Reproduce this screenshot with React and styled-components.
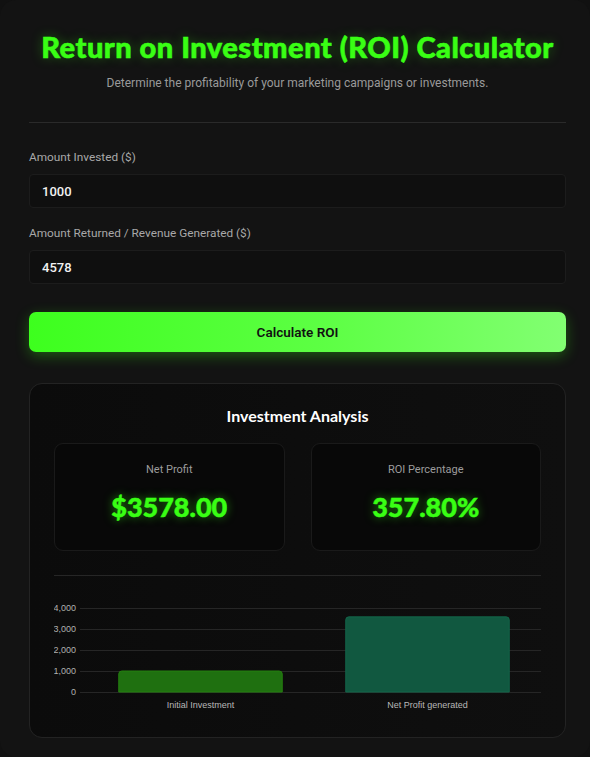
import React, { useState } from "react"
import styled, { createGlobalStyle } from "styled-components"

const GlobalStyle = createGlobalStyle`
  html, body {
    margin: 0;
    padding: 0;
    background: #111111;
  }
  body {
    font-family: Roboto, "Liberation Sans", Arial, sans-serif;
    color: #e8e8e8;
  }
  * {
    box-sizing: border-box;
  }
`

const Page = styled.main`
  min-height: 757px;
  background: #131313;
  border-radius: 16px;
  padding: 30px 24px 0 29px;
  display: flex;
  flex-direction: column;
`

const Header = styled.header`
  text-align: center;
  padding-bottom: 30px;
  border-bottom: 1px solid #2a2a2a;
  margin-bottom: 26px;
`

const Title = styled.h1`
  margin: 0 0 10px;
  font-family: Lato, "Noto Sans", sans-serif;
  font-weight: 900;
  font-size: 29px;
  line-height: 34px;
  letter-spacing: 0.5px;
  color: #39ff14;
  -webkit-text-stroke: 0.6px #39ff14;
  text-shadow: 0 0 12px rgba(57, 255, 20, 0.35);
`

const Subtitle = styled.p`
  margin: 0;
  font-size: 12px;
  line-height: 18px;
  color: #9a9a9a;
`

const Field = styled.div`
  display: flex;
  flex-direction: column;
  gap: 9px;
  margin-bottom: 17px;
`

const Label = styled.label`
  font-size: 11.8px;
  line-height: 16px;
  color: #a8a8a8;
`

const Input = styled.input`
  height: 34px;
  width: 100%;
  padding: 0 12px;
  background: #0f0f0f;
  border: 1px solid #1c1c1c;
  border-radius: 4px;
  color: #f2f2f2;
  font-family: inherit;
  font-weight: 500;
  font-size: 13px;
  outline: none;
`

const Button = styled.button`
  margin-top: 11px;
  height: 40px;
  width: 100%;
  border: none;
  border-radius: 7px;
  background: linear-gradient(90deg, #3dff1e 0%, #5dff44 55%, #82ff72 100%);
  box-shadow: 0 4px 14px rgba(57, 255, 20, 0.3);
  color: #111;
  font-family: inherit;
  font-weight: 600;
  font-size: 13.5px;
  cursor: pointer;
`

const Results = styled.section`
  margin-top: 31px;
  border: 1px solid #232323;
  border-radius: 13px;
  background: linear-gradient(90deg, #0b0b0b 0%, #0f0f0f 100%);
  padding: 21px 24px 26px;
`

const ResultsTitle = styled.h2`
  margin: 0 0 16px;
  text-align: center;
  font-family: Lato, "Noto Sans", sans-serif;
  font-weight: 700;
  font-size: 16px;
  line-height: 22px;
  color: #ffffff;
`

const Stats = styled.div`
  display: grid;
  grid-template-columns: 1fr 1fr;
  gap: 26px;
  padding-bottom: 24px;
  border-bottom: 1px solid #262626;
`

const StatCard = styled.div`
  height: 108px;
  background: #080808;
  border: 1px solid #1a1a1a;
  border-radius: 9px;
  display: flex;
  flex-direction: column;
  align-items: center;
  padding-top: 19px;
`

const StatLabel = styled.span`
  font-size: 11px;
  line-height: 14px;
  color: #9c9c9c;
`

const StatValue = styled.span`
  margin-top: 14px;
  font-family: Lato, "Noto Sans", sans-serif;
  font-weight: 900;
  font-size: 27px;
  line-height: 32px;
  color: #39ff14;
  -webkit-text-stroke: 0.5px #39ff14;
  text-shadow: 0 0 10px rgba(57, 255, 20, 0.55);
`

const ChartWrap = styled.div`
  padding-top: 11px;
  display: flex;
`

const ticks = [0, 1000, 2000, 3000, 4000]

// simple bar chart: plot area x 33..487, zero line at y 105, 21px per 1000
const BarChart = ({ invested, profit }) => {
  const left = 33
  const right = 487
  const zeroY = 105
  const scale = 21 / 1000
  const cat = (right - left) / 2
  const barW = cat * 0.72
  const bars = [
    { label: "Initial Investment", value: invested, fill: "#1f7010", stroke: "#24800f" },
    { label: "Net Profit generated", value: profit, fill: "#115840", stroke: "#13664a" },
  ]
  return (
    <svg width="487" height="124" viewBox="0 0 487 124">
      {ticks.map((t) => {
        const y = zeroY - t * scale
        return (
          <g key={t}>
            <line x1={26} x2={487} y1={y + 0.5} y2={y + 0.5} stroke="#262626" strokeWidth="1" />
            <text
              x={22}
              y={y + 3}
              textAnchor="end"
              fontFamily="Liberation Sans, Arial, sans-serif"
              fontSize="9"
              fill="#b0b0b0"
            >
              {t.toLocaleString("en-US")}
            </text>
          </g>
        )
      })}
      {bars.map((b, i) => {
        const cx = left + cat * i + cat / 2
        const h = b.value * scale
        return (
          <g key={b.label}>
            <path
              d={`M${cx - barW / 2} ${zeroY} V${zeroY - h + 3} Q${cx - barW / 2} ${zeroY - h} ${
                cx - barW / 2 + 3
              } ${zeroY - h} H${cx + barW / 2 - 3} Q${cx + barW / 2} ${zeroY - h} ${cx + barW / 2} ${
                zeroY - h + 3
              } V${zeroY} Z`}
              fill={b.fill}
              stroke={b.stroke}
              strokeWidth="1"
            />
            <text
              x={cx}
              y={zeroY + 16}
              textAnchor="middle"
              fontFamily="Liberation Sans, Arial, sans-serif"
              fontSize="9"
              fill="#b8b8b8"
            >
              {b.label}
            </text>
          </g>
        )
      })}
    </svg>
  )
}

const App = () => {
  const [invested, setInvested] = useState("1000")
  const [returned, setReturned] = useState("4578")
  const inv = parseFloat(invested) || 0
  const ret = parseFloat(returned) || 0
  const profit = ret - inv
  const roi = inv ? (profit / inv) * 100 : 0

  return (
    <>
      <GlobalStyle />
      <Page>
        <Header>
          <Title>Return on Investment (ROI) Calculator</Title>
          <Subtitle>Determine the profitability of your marketing campaigns or investments.</Subtitle>
        </Header>
        <Field>
          <Label htmlFor="invested">Amount Invested ($)</Label>
          <Input id="invested" value={invested} onChange={(e) => setInvested(e.target.value)} />
        </Field>
        <Field>
          <Label htmlFor="returned">Amount Returned / Revenue Generated ($)</Label>
          <Input id="returned" value={returned} onChange={(e) => setReturned(e.target.value)} />
        </Field>
        <Button>Calculate ROI</Button>
        <Results>
          <ResultsTitle>Investment Analysis</ResultsTitle>
          <Stats>
            <StatCard>
              <StatLabel>Net Profit</StatLabel>
              <StatValue>${profit.toFixed(2)}</StatValue>
            </StatCard>
            <StatCard>
              <StatLabel>ROI Percentage</StatLabel>
              <StatValue>{roi.toFixed(2)}%</StatValue>
            </StatCard>
          </Stats>
          <ChartWrap>
            <BarChart invested={inv} profit={profit} />
          </ChartWrap>
        </Results>
      </Page>
    </>
  )
}

export default App
